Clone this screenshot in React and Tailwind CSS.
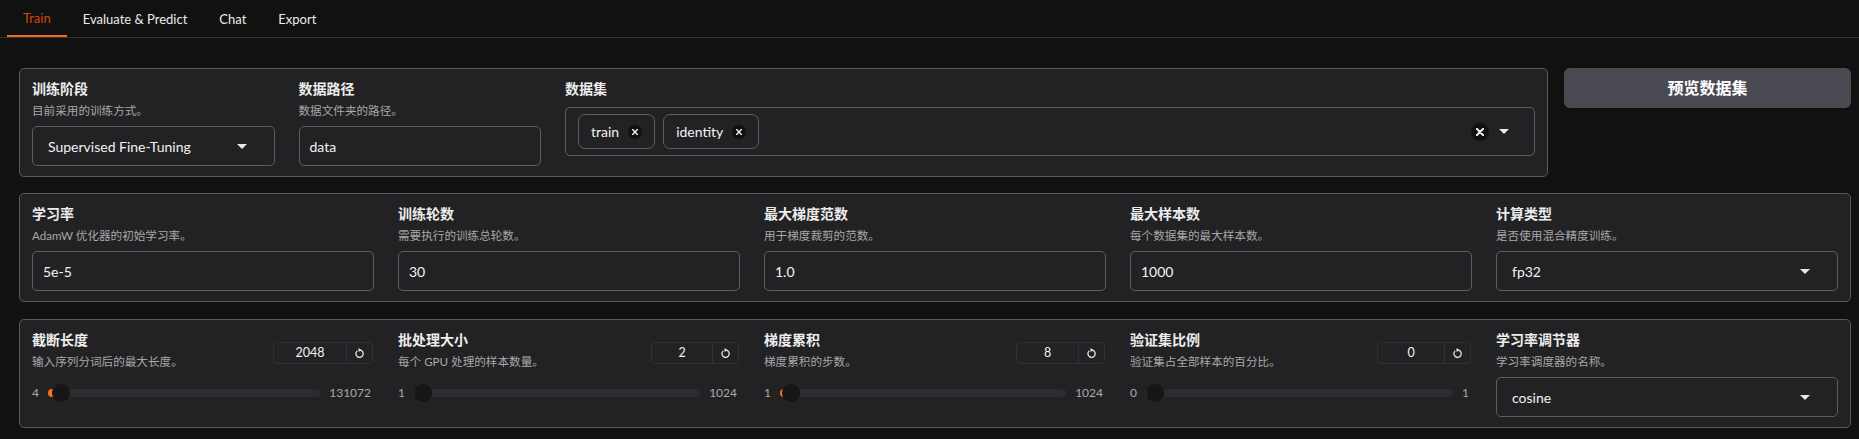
import React from "react";

function Caret() {
  return (
    <svg width="10" height="5" viewBox="0 0 10 5" className="shrink-0">
      <path d="M0 0H10L5 5Z" fill="#e8e8e8" />
    </svg>
  );
}

function XIcon({ size = 6, stroke = 1.4 }) {
  return (
    <svg width={size} height={size} viewBox="0 0 10 10">
      <path d="M1 1L9 9M9 1L1 9" stroke="#f0f0f0" strokeWidth={stroke * 1.6} strokeLinecap="round" />
    </svg>
  );
}

function ResetIcon() {
  return (
    <svg width="11" height="11" viewBox="0 0 12 12" fill="none">
      <path d="M3.2 3.4A4 4 0 1 0 6 2.2" stroke="#e8e8e8" strokeWidth="1.4" strokeLinecap="round" />
      <path d="M5.2 0.6L7.4 2.2L5.2 3.8Z" fill="#e8e8e8" stroke="#e8e8e8" strokeWidth="0.6" strokeLinejoin="round" />
    </svg>
  );
}

function Label({ children }) {
  return <div className="text-[14px] leading-[20px] font-semibold text-[#ededed]">{children}</div>;
}
function Desc({ children }) {
  return <div className="mt-[4px] text-[11.6px] leading-[16px] text-[#a8a8a8]">{children}</div>;
}

function Field({ label, desc, children }) {
  return (
    <div className="flex flex-col min-w-0">
      <Label>{label}</Label>
      <Desc>{desc}</Desc>
      <div className="mt-[7px]">{children}</div>
    </div>
  );
}

function TextBox({ value }) {
  return (
    <div className="h-[40px] border border-[#5e5e62] rounded-[5px] px-[10px] flex items-center text-[14px] text-[#f2f2f2]">
      {value}
    </div>
  );
}

function SelectBox({ value }) {
  return (
    <div className="h-[40px] border border-[#5e5e62] rounded-[5px] pl-[15px] pr-[27px] flex items-center justify-between text-[14px] text-[#f2f2f2]">
      <span>{value}</span>
      <Caret />
    </div>
  );
}

function Chip({ text }) {
  return (
    <div className="h-[35px] border border-[#5e5e62] rounded-[7px] pl-[12px] pr-[12px] flex items-center gap-[9px] text-[14px] text-[#f2f2f2]">
      <span>{text}</span>
      <span className="w-[14px] h-[14px] rounded-full bg-[#111111] flex items-center justify-center">
        <XIcon size={6} />
      </span>
    </div>
  );
}

function SliderField({ label, desc, value, min, max, boxW }) {
  const pct = (Number(value) - Number(min)) / (Number(max) - Number(min));
  return (
    <div className="flex flex-col min-w-0">
      <div className="flex items-start justify-between">
        <div>
          <Label>{label}</Label>
          <Desc>{desc}</Desc>
        </div>
        <div className="mt-[12px] mr-[1px] flex h-[22px] border border-[#303034] rounded-[4px]">
          <div
            className={`${boxW} flex items-center justify-center text-[12.5px] text-[#f2f2f2]`}
          >
            {value}
          </div>
          <div className="w-[26px] border-l border-[#303034] flex items-center justify-center">
            <ResetIcon />
          </div>
        </div>
      </div>
      <div className="mt-[13px] h-[20px] flex items-center gap-[9px] pr-[3px] text-[12px] text-[#a8a8a8]">
        <span>{min}</span>
        <div className="relative flex-1 h-[8px] rounded-full bg-[#2c2c30]">
          <div
            className="absolute left-0 top-0 h-[8px] rounded-l-full bg-[#f97316]"
            style={{ width: `calc(${pct} * (100% - 18px) + 9px)` }}
          />
          <div
            className="absolute top-[-5px] w-[18px] h-[18px] rounded-full bg-[#161616]"
            style={{ left: `calc(${pct} * (100% - 18px))` }}
          />
        </div>
        <span>{max}</span>
      </div>
    </div>
  );
}

const panel = "border border-[#5a5a5e] rounded-[5px] bg-[#222224] px-[12px] pt-[10px] pb-[10px]";

export default function App() {
  return (
    <div className="min-h-[439px] bg-[#111111] text-[#ededed] font-['Lato','Noto_Sans_CJK_SC',sans-serif]">
      <div className="flex pl-[7px] h-[38px] border-b border-[#333336] text-[13px]">
        <div className="px-[16px] flex items-center h-[37px] border-b-2 border-[#f46b1c] text-[#d2470f] pt-[2px]">
          Train
        </div>
        <div className="px-[16px] flex items-center h-[37px] pt-[2px] text-[#ececec]">Evaluate &amp; Predict</div>
        <div className="px-[16px] flex items-center h-[37px] pt-[2px] text-[#ececec]">Chat</div>
        <div className="px-[16px] flex items-center h-[37px] pt-[2px] text-[#ececec]">Export</div>
      </div>

      <div className="pl-[19px] pr-[8px] pt-[30px]">
        <div className="flex gap-[16px] items-start">
          <div className={`${panel} flex-1 grid grid-cols-[1fr_1fr_4fr] gap-[24px]`}>
            <Field label="训练阶段" desc="目前采用的训练方式。">
              <SelectBox value="Supervised Fine-Tuning" />
            </Field>
            <Field label="数据路径" desc="数据文件夹的路径。">
              <TextBox value="data" />
            </Field>
            <div className="flex flex-col min-w-0">
              <Label>数据集</Label>
              <div className="mt-[8px] h-[49px] border border-[#5e5e62] rounded-[5px] pl-[12px] pr-[25px] flex items-center gap-[8px]">
                <Chip text="train" />
                <Chip text="identity" />
                <div className="flex-1" />
                <span className="w-[18px] h-[18px] rounded-full bg-[#111111] flex items-center justify-center">
                  <XIcon size={8} stroke={1.5} />
                </span>
                <span className="ml-[2px]">
                  <Caret />
                </span>
              </div>
            </div>
          </div>
          <div className="w-[287px] h-[40px] rounded-[6px] bg-[#4a4a52] flex items-center justify-center text-[16px] font-bold text-white">
            预览数据集
          </div>
        </div>

        <div className={`${panel} mt-[16px] grid grid-cols-5 gap-[24px]`}>
          <Field label="学习率" desc="AdamW 优化器的初始学习率。">
            <TextBox value="5e-5" />
          </Field>
          <Field label="训练轮数" desc="需要执行的训练总轮数。">
            <TextBox value="30" />
          </Field>
          <Field label="最大梯度范数" desc="用于梯度裁剪的范数。">
            <TextBox value="1.0" />
          </Field>
          <Field label="最大样本数" desc="每个数据集的最大样本数。">
            <TextBox value="1000" />
          </Field>
          <Field label="计算类型" desc="是否使用混合精度训练。">
            <SelectBox value="fp32" />
          </Field>
        </div>

        <div className={`${panel} mt-[17px] grid grid-cols-5 gap-[24px]`}>
          <SliderField label="截断长度" desc="输入序列分词后的最大长度。" value="2048" min="4" max="131072" boxW="w-[72px]" />
          <SliderField label="批处理大小" desc="每个 GPU 处理的样本数量。" value="2" min="1" max="1024" boxW="w-[60px]" />
          <SliderField label="梯度累积" desc="梯度累积的步数。" value="8" min="1" max="1024" boxW="w-[61px]" />
          <SliderField label="验证集比例" desc="验证集占全部样本的百分比。" value="0" min="0" max="1" boxW="w-[66px]" />
          <Field label="学习率调节器" desc="学习率调度器的名称。">
            <SelectBox value="cosine" />
          </Field>
        </div>
      </div>
    </div>
  );
}
